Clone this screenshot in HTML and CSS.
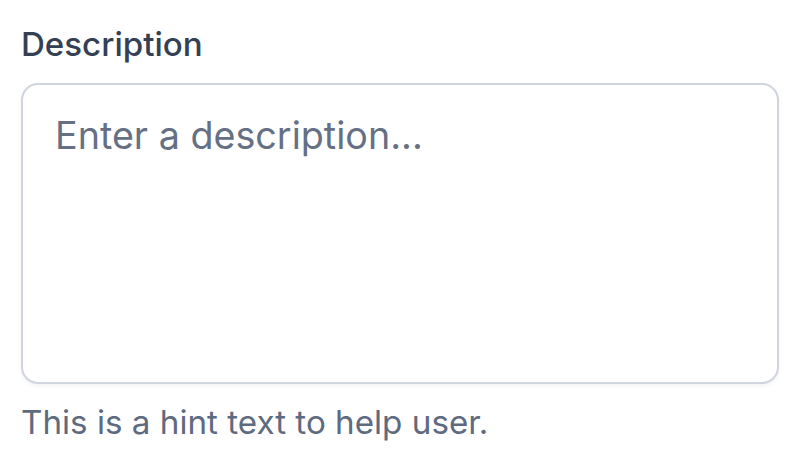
FILE: index.html
```html
<!DOCTYPE html>
<html lang="en">
<head>
<meta charset="utf-8">
<title>Description</title>
<link rel="stylesheet" href="styles.css">
</head>
<body>
  <div class="field">
    <label class="field-label" for="desc">Description</label>
    <div class="textarea" id="desc" role="textbox" aria-multiline="true">
      <span class="placeholder">Enter a description...</span>
    </div>
    <p class="hint">This is a hint text to help user.</p>
  </div>
</body>
</html>
```

FILE: styles.css
```css
* { box-sizing: border-box; }
html, body { margin: 0; padding: 0; background: #ffffff; }
body {
  font-family: Inter, "Noto Sans", "Liberation Sans", sans-serif;
  width: 800px;
  height: 468px;
  overflow: hidden;
}
.field {
  display: flex;
  flex-direction: column;
  padding: 21px 21px 0 21px;
}
.field-label {
  font-size: 33.1px;
  line-height: 46px;
  font-weight: 500;
  color: #344054;
  margin-bottom: 16px;
}
.textarea {
  width: 758px;
  height: 301px;
  border: 2px solid #D0D5DD;
  border-radius: 17px;
  box-shadow: 0 2px 4px rgba(16, 24, 40, 0.05);
  padding: 23px 32px;
  background: #ffffff;
}
.placeholder {
  display: block;
  font-size: 37.7px;
  line-height: 54px;
  color: #667085;
}
.hint {
  margin: 15px 0 0 0;
  font-size: 33.2px;
  line-height: 46px;
  color: #5E6A80;
}
```
